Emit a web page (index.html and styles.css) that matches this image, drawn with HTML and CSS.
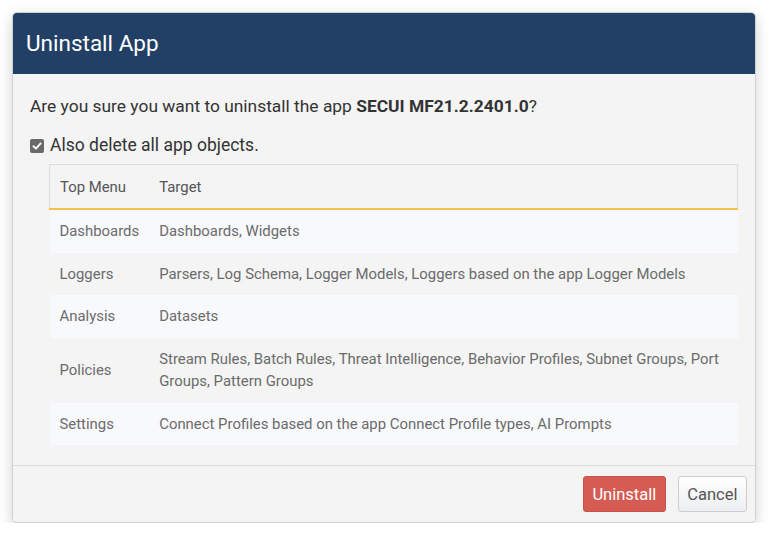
FILE: index.html
```html
<!DOCTYPE html>
<html>
<head>
<meta charset="utf-8">
<link rel="stylesheet" href="styles.css">
</head>
<body>
<div class="dialog">
  <div class="dialog-header">Uninstall App</div>
  <div class="dialog-body">
    <p class="question">Are you sure you want to uninstall the app <strong>SECUI MF21.2.2401.0</strong>?</p>
    <label class="check">
      <span class="check-box"><svg width="10" height="10" viewBox="0 0 10 10"><path d="M1.5 5.2 L4 7.6 L8.6 2.4" fill="none" stroke="#fff" stroke-width="1.9" stroke-linecap="round" stroke-linejoin="round"/></svg></span>
      <span>Also delete all app objects.</span>
    </label>
    <table class="objects">
      <thead>
        <tr><th class="col-menu">Top Menu</th><th>Target</th></tr>
      </thead>
      <tbody>
        <tr class="alt"><td>Dashboards</td><td>Dashboards, Widgets</td></tr>
        <tr><td>Loggers</td><td>Parsers, Log Schema, Logger Models, Loggers based on the app Logger Models</td></tr>
        <tr class="alt"><td>Analysis</td><td>Datasets</td></tr>
        <tr><td>Policies</td><td>Stream Rules, Batch Rules, Threat Intelligence, Behavior Profiles, Subnet Groups, Port Groups, Pattern Groups</td></tr>
        <tr class="alt"><td>Settings</td><td>Connect Profiles based on the app Connect Profile types, AI Prompts</td></tr>
      </tbody>
    </table>
  </div>
  <div class="dialog-footer">
    <button class="btn btn-danger">Uninstall</button>
    <button class="btn btn-default">Cancel</button>
  </div>
</div>
</body>
</html>
```

FILE: styles.css
```css
html, body {
  margin: 0;
  padding: 0;
  background: #ffffff;
}
body {
  font-family: Roboto, "Liberation Sans", sans-serif;
  padding: 12px 0 0 12px;
}
.dialog {
  width: 742px;
  background: #f3f4f3;
  border: 1px solid #cfd1d3;
  border-radius: 5px;
  box-shadow: 0 4px 14px rgba(0, 0, 0, 0.18);
  overflow: hidden;
}
.dialog-header {
  background: #223f66;
  color: #ffffff;
  font-size: 22.5px;
  height: 61px;
  line-height: 61px;
  padding-left: 13px;
}
.dialog-body {
  padding: 20px 17px 20px 17px;
  border-bottom: 1px solid #dcdcdc;
}
.question {
  margin: 0;
  font-size: 17.4px;
  line-height: 25px;
  color: #333333;
}
.question strong {
  font-weight: 700;
}
.check {
  display: flex;
  align-items: center;
  gap: 6px;
  margin-top: 14px;
  font-size: 17.5px;
  line-height: 25px;
  color: #333333;
}
.check-box {
  width: 14px;
  height: 14px;
  border-radius: 2px;
  background: #6a6a6a;
  display: flex;
  align-items: center;
  justify-content: center;
}
.objects {
  margin: 6px 0 0 19px;
  width: 689px;
  border-collapse: collapse;
  font-size: 14.9px;
  color: #6b6b6b;
}
.objects th {
  text-align: left;
  font-weight: 400;
  color: #555555;
  height: 43px;
  padding: 0 10px;
  border-top: 1px solid #dddddd;
  border-bottom: 2px solid #f4c14f;
}
.objects th:first-child {
  border-left: 1px solid #dddddd;
}
.objects th:last-child {
  border-right: 1px solid #dddddd;
}
.objects .col-menu {
  width: 79px;
}
.objects td {
  padding: 10px 10px;
  line-height: 22.5px;
  vertical-align: middle;
}
.objects tr.alt td {
  background: #f8f9fc;
}
.dialog-footer {
  display: flex;
  justify-content: flex-end;
  gap: 12px;
  padding: 10px 8px 10px 0;
}
.btn {
  font-family: Roboto, "Liberation Sans", sans-serif;
  font-size: 16.5px;
  height: 36px;
  padding: 0 8.5px;
  border-radius: 3px;
  cursor: pointer;
}
.btn-danger {
  background: #d45c52;
  color: #ffffff;
  border: 1px solid #c9514a;
}
.btn-default {
  background: linear-gradient(#ffffff, #eceef0);
  color: #555555;
  border: 1px solid #cccccc;
}
```
